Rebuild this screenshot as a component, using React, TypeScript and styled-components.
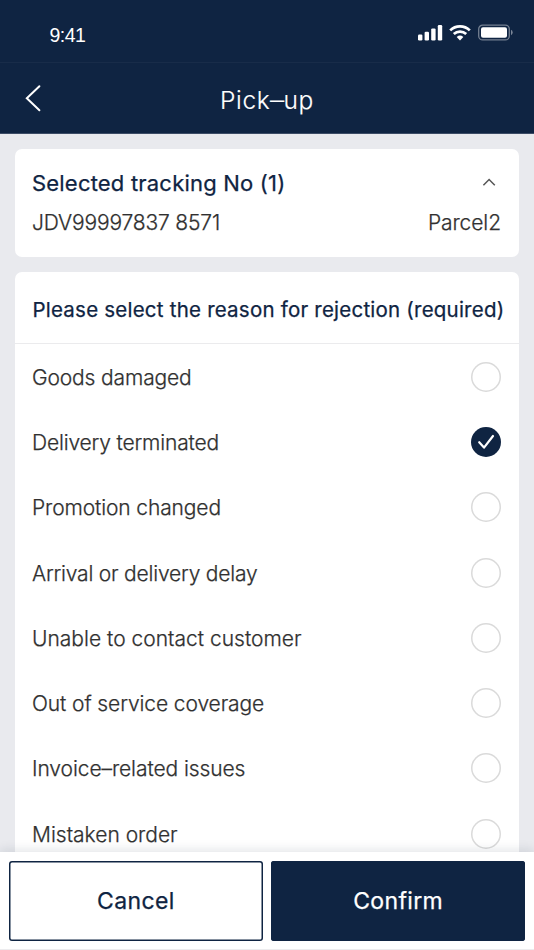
import React, { useState } from 'react';
import styled, { createGlobalStyle } from 'styled-components';

const NAVY = '#0f2442';

const GlobalStyle = createGlobalStyle`
  * { box-sizing: border-box; }
  body {
    margin: 0;
    background: #e9eaee;
    font-family: Inter, 'Liberation Sans', sans-serif;
  }
`;

const Screen = styled.div`
  display: flex;
  flex-direction: column;
  width: 534px;
  height: 950px;
  overflow: hidden;
  background: #e9eaee;
`;

const StatusBar = styled.div`
  flex: none;
  display: flex;
  justify-content: space-between;
  align-items: flex-start;
  height: 63px;
  padding: 24px 21px 0 49.5px;
  background: ${NAVY};
  border-bottom: 1px solid #182c49;
`;

const Time = styled.span`
  margin-top: -1px;
  font: 400 19.5px/24px 'Liberation Sans', sans-serif;
  letter-spacing: -0.5px;
  color: #fff;
`;

const StatusIcons = styled.svg`
  display: block;
  width: 96px;
  height: 18px;
`;

const NavBar = styled.header`
  flex: none;
  display: grid;
  grid-template-columns: 66px 1fr 66px;
  align-items: center;
  height: 71px;
  background: ${NAVY};
  border-bottom: 1px solid #3c4c66;
`;

const BackButton = styled.button`
  display: flex;
  padding: 0 0 0 24px;
  border: 0;
  background: none;
  cursor: pointer;
`;

const PageTitle = styled.h1`
  margin: 3px 0 0;
  text-align: center;
  color: #fff;
  font-size: 24.5px;
  font-weight: 300;
  line-height: 32px;
  letter-spacing: 0.7px;
  -webkit-text-stroke: 0.15px #fff;
`;

const Dash = styled.span`
  display: inline-block;
  transform: scaleX(1.15);
`;

const Content = styled.main`
  flex: 1;
  min-height: 0;
  display: flex;
  flex-direction: column;
  gap: 15px;
  padding: 15px 15px 0;
  overflow: hidden;
`;

const Card = styled.section`
  flex: none;
  background: #fff;
  border-radius: 7px;
`;

const ParcelCard = styled(Card)`
  height: 108px;
  padding: 19px 18px 0 17px;
`;

const CardRow = styled.div`
  display: flex;
  justify-content: space-between;
  align-items: center;
`;

const TrackingTitle = styled.h2`
  margin: 0;
  color: ${NAVY};
  font-size: 22px;
  font-weight: 400;
  line-height: 30px;
  letter-spacing: 0.2px;
  -webkit-text-stroke: 0.25px ${NAVY};
`;

const ToggleButton = styled.button`
  display: flex;
  padding: 0 4px 0 0;
  border: 0;
  background: none;
  cursor: pointer;
`;

const Text = styled.span<{ $spacing?: number }>`
  color: #303030;
  font-size: 21px;
  font-weight: 300;
  line-height: 30px;
  letter-spacing: ${(p) => p.$spacing ?? 0}px;
  white-space: nowrap;
  -webkit-text-stroke: 0.25px #303030;
`;

const ParcelRow = styled(CardRow)`
  margin-top: 10px;
`;

const ReasonHeading = styled.h2`
  height: 72px;
  margin: 0;
  padding: 23px 0 0 17.5px;
  border-bottom: 1px solid #ebebed;
  color: ${NAVY};
  font-size: 20.5px;
  font-weight: 400;
  line-height: 30px;
  letter-spacing: 0.22px;
  white-space: nowrap;
  -webkit-text-stroke: 0.25px ${NAVY};
`;

const ReasonList = styled.ul`
  margin: 0;
  padding: 0 18px 0 17px;
  list-style: none;
`;

const ReasonRow = styled.li`
  display: flex;
  justify-content: space-between;
  align-items: center;
  height: 65.3px;
  cursor: pointer;

  > ${Text} {
    padding-top: 2px;
  }
`;

const Radio = styled.span<{ $checked: boolean }>`
  display: flex;
  align-items: center;
  justify-content: center;
  width: 30px;
  height: 30px;
  border-radius: 50%;
  box-shadow: ${(p) => (p.$checked ? 'none' : 'inset 0 0 0 1.5px #dadada')};
  background: ${(p) => (p.$checked ? NAVY : '#fff')};
`;

const Footer = styled.footer`
  flex: none;
  position: relative;
  display: grid;
  grid-template-columns: 1fr 1fr;
  gap: 8.5px;
  height: 98px;
  padding: 8.5px 9px 9px;
  background: #fff;
  border-bottom: 1px solid #ececee;
  box-shadow: 0 -2px 10px rgba(20, 30, 60, 0.12);
`;

const ActionButton = styled.button<{ $primary?: boolean }>`
  height: 80px;
  padding: 1px 0 0;
  border: 0;
  border-radius: 3px;
  box-shadow: inset 0 0 0 1.5px ${NAVY};
  background: ${(p) => (p.$primary ? NAVY : '#fff')};
  color: ${(p) => (p.$primary ? '#fff' : NAVY)};
  font-family: inherit;
  font-size: 23px;
  font-weight: 400;
  letter-spacing: 0.35px;
  -webkit-text-stroke: 0.25px currentColor;
  cursor: pointer;
`;

const reasons = [
  { label: 'Goods damaged', spacing: -0.14 },
  { label: 'Delivery terminated', spacing: -0.16 },
  { label: 'Promotion changed', spacing: -0.12 },
  { label: 'Arrival or delivery delay', spacing: -0.2 },
  { label: 'Unable to contact customer', spacing: 0.01 },
  { label: 'Out of service coverage', spacing: -0.1 },
  { label: 'Invoice–related issues', spacing: -0.08 },
  { label: 'Mistaken order', spacing: 0 },
];

export default function App() {
  const [selected, setSelected] = useState(1);

  return (
    <>
      <GlobalStyle />
      <Screen>
        <StatusBar>
          <Time>9:41</Time>
          <StatusIcons viewBox="0 0 96 18">
            <g fill="#fff">
              <rect x="1" y="10.5" width="4.4" height="6" rx="1.2" />
              <rect x="7.6" y="7.8" width="4.4" height="8.7" rx="1.2" />
              <rect x="14.2" y="4.4" width="4.4" height="12.1" rx="1.2" />
              <rect x="20.8" y="1" width="4.4" height="15.5" rx="1.2" />
            </g>
            <g fill="none" stroke="#fff" strokeWidth="2.7">
              <path d="M33.2 6.4 A14 14 0 0 1 52.8 6.4" />
              <path d="M36.8 10.1 A9 9 0 0 1 49.2 10.1" />
            </g>
            <path d="M39.7 13 A5 5 0 0 1 46.3 13 L43 16.4 Z" fill="#fff" />
            <rect x="61.7" y="1.1" width="30.6" height="14.8" rx="4" fill="none" stroke="#fff" strokeOpacity=".42" strokeWidth="1.3" />
            <rect x="64" y="3.3" width="26" height="10.4" rx="2" fill="#fff" />
            <path d="M94 5.8 A3 3 0 0 1 94 11.2 Z" fill="#fff" fillOpacity=".45" />
          </StatusIcons>
        </StatusBar>
        <NavBar>
          <BackButton aria-label="Back">
            <svg width="18" height="28" viewBox="0 0 18 28" fill="none" stroke="#fff" strokeWidth="2" strokeLinecap="round">
              <path d="M15.4 2.2 L2.8 14.2 L15.4 26.2" />
            </svg>
          </BackButton>
          <PageTitle>
            Pick<Dash>–</Dash>up
          </PageTitle>
        </NavBar>
        <Content>
          <ParcelCard>
            <CardRow>
              <TrackingTitle>Selected tracking No (1)</TrackingTitle>
              <ToggleButton aria-label="Collapse">
                <svg width="16" height="12" viewBox="0 0 16 12" fill="none" stroke="#555" strokeWidth="1.5">
                  <path d="M2.4 8.3 L8.1 2.5 L13.8 8.3" />
                </svg>
              </ToggleButton>
            </CardRow>
            <ParcelRow>
              <Text $spacing={-0.16}>JDV99997837 8571</Text>
              <Text $spacing={-0.08}>Parcel2</Text>
            </ParcelRow>
          </ParcelCard>
          <Card>
            <ReasonHeading>Please select the reason for rejection (required)</ReasonHeading>
            <ReasonList>
              {reasons.map((r, i) => (
                <ReasonRow key={r.label} onClick={() => setSelected(i)}>
                  <Text $spacing={r.spacing}>{r.label}</Text>
                  <Radio $checked={i === selected}>
                    {i === selected && (
                      <svg width="30" height="30" viewBox="0 0 30 30" fill="none" stroke="#fff" strokeWidth="2.2" strokeLinecap="round" strokeLinejoin="round">
                        <path d="M8.2 15.2 L13 20.6 L22 9" />
                      </svg>
                    )}
                  </Radio>
                </ReasonRow>
              ))}
            </ReasonList>
          </Card>
        </Content>
        <Footer>
          <ActionButton>Cancel</ActionButton>
          <ActionButton $primary>Confirm</ActionButton>
        </Footer>
      </Screen>
    </>
  );
}
